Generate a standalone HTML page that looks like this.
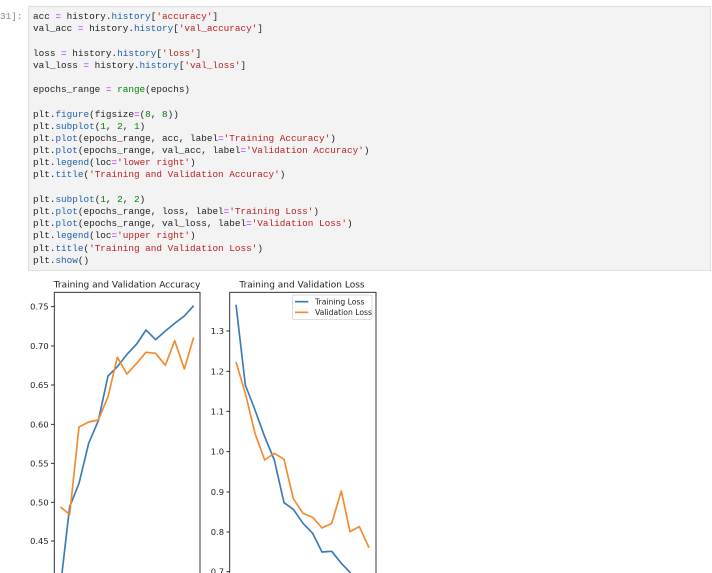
<!DOCTYPE html>
<html><head><meta charset="utf-8"><style>
html,body{margin:0;padding:0;background:#fff;width:712px;height:573px;overflow:hidden;position:relative}
.p{position:absolute;left:0;top:11px;font:9.4px "Liberation Mono",monospace;color:#888}
.cell{position:absolute;left:28px;top:6px;width:683px;height:265px;background:#f3f3f3;border:1px solid #e0e0e0;box-sizing:border-box}
.code{position:absolute;left:33px;top:11px;font:9.35px "Liberation Mono",monospace;color:#222}
.code div{height:12.2px;line-height:12.2px;white-space:pre;overflow:visible}
.b{color:#1f5fa8}.s{color:#ba2121}.n{color:#008000}.o{color:#aa22ff}.g{color:#008000}
svg{position:absolute;left:0;top:270px}
</style></head><body>
<div class="cell"></div>
<div class="p">31]:</div>
<div class="code">
<div>acc <span class="o">=</span> history.<span class="b">history</span>[<span class="s">'accuracy'</span>]</div>
<div>val_acc <span class="o">=</span> history.<span class="b">history</span>[<span class="s">'val_accuracy'</span>]</div>
<div> </div>
<div>loss <span class="o">=</span> history.<span class="b">history</span>[<span class="s">'loss'</span>]</div>
<div>val_loss <span class="o">=</span> history.<span class="b">history</span>[<span class="s">'val_loss'</span>]</div>
<div> </div>
<div>epochs_range <span class="o">=</span> <span class="g">range</span>(epochs)</div>
<div> </div>
<div>plt.<span class="b">figure</span>(figsize<span class="o">=</span>(<span class="n">8</span>, <span class="n">8</span>))</div>
<div>plt.<span class="b">subplot</span>(<span class="n">1</span>, <span class="n">2</span>, <span class="n">1</span>)</div>
<div>plt.<span class="b">plot</span>(epochs_range, acc, label<span class="o">=</span><span class="s">'Training Accuracy'</span>)</div>
<div>plt.<span class="b">plot</span>(epochs_range, val_acc, label<span class="o">=</span><span class="s">'Validation Accuracy'</span>)</div>
<div>plt.<span class="b">legend</span>(loc<span class="o">=</span><span class="s">'lower right'</span>)</div>
<div>plt.<span class="b">title</span>(<span class="s">'Training and Validation Accuracy'</span>)</div>
<div> </div>
<div>plt.<span class="b">subplot</span>(<span class="n">1</span>, <span class="n">2</span>, <span class="n">2</span>)</div>
<div>plt.<span class="b">plot</span>(epochs_range, loss, label<span class="o">=</span><span class="s">'Training Loss'</span>)</div>
<div>plt.<span class="b">plot</span>(epochs_range, val_loss, label<span class="o">=</span><span class="s">'Validation Loss'</span>)</div>
<div>plt.<span class="b">legend</span>(loc<span class="o">=</span><span class="s">'upper right'</span>)</div>
<div>plt.<span class="b">title</span>(<span class="s">'Training and Validation Loss'</span>)</div>
<div>plt.<span class="b">show</span>()</div>
</div>
<svg width="390" height="303" viewBox="0 0 1170 909" font-family="'DejaVu Sans','Liberation Sans',sans-serif" fill="#222">
<text x="381" y="52" font-size="27" text-anchor="middle">Training and Validation Accuracy</text>
<text x="906" y="52" font-size="27" text-anchor="middle">Training and Validation Loss</text>
<g stroke="#333" stroke-width="3" fill="none">
<rect x="163" y="67" width="437" height="860"/>
<rect x="689" y="67" width="439" height="860"/>
<path d="M163 110h-10M163 228h-10M163 345h-10M163 463h-10M163 580h-10M163 697h-10M163 813h-10"/>
<path d="M689 183h-10M689 304h-10M689 424h-10M689 545h-10M689 666h-10M689 786h-10M689 905h-10"/>
</g>
<g font-size="25" text-anchor="end">
<text x="146" y="119">0.75</text><text x="146" y="237">0.70</text><text x="146" y="354">0.65</text><text x="146" y="472">0.60</text><text x="146" y="589">0.55</text><text x="146" y="706">0.50</text><text x="146" y="822">0.45</text>
<text x="672" y="192">1.3</text><text x="672" y="313">1.2</text><text x="672" y="433">1.1</text><text x="672" y="554">1.0</text><text x="672" y="675">0.9</text><text x="672" y="795">0.8</text><text x="672" y="914">0.7</text>
</g>
<g fill="none" stroke-width="5" stroke-linejoin="round">
<polyline stroke="#3a7ab8" points="186,909 209,710 237,640 266,520 295,452 324,318 352,290 381,253 410,222 438,180 467,209 496,183 524,160 553,138 581,107"/>
<polyline stroke="#f28a30" points="181,711 209,733 237,471 266,456 295,450 324,380 352,262 381,312 410,280 438,247 467,250 496,286 524,212 553,297 581,202"/>
<polyline stroke="#3a7ab8" points="708,104 736,345 765,420 794,500 823,570 852,698 880,718 909,760 938,790 966,846 995,844 1024,880 1052,909"/>
<polyline stroke="#f28a30" points="708,276 736,370 765,490 794,570 823,550 852,568 880,686 909,730 938,742 966,774 995,760 1024,663 1050,785 1078,770 1107,833"/>
</g>
<rect x="877" y="75" width="239" height="73" rx="5" fill="#fff" stroke="#ccc" stroke-width="2"/>
<path d="M885 95h40" stroke="#3a7ab8" stroke-width="5"/>
<path d="M885 127h40" stroke="#f28a30" stroke-width="5"/>
<text x="945" y="103" font-size="23">Training Loss</text>
<text x="945" y="135" font-size="23">Validation Loss</text>
</svg>
</body></html>
